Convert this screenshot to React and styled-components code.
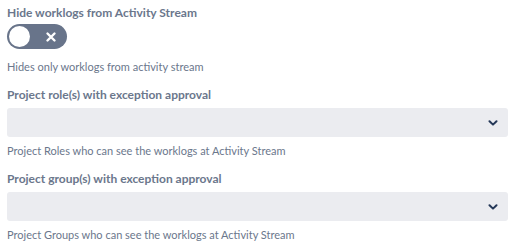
import styled, { createGlobalStyle } from "styled-components";

const GlobalStyle = createGlobalStyle`
  body {
    margin: 0;
    background: #fff;
    font-family: Lato, "Noto Sans", sans-serif;
  }
`;

function Chevron() {
  return (
    <svg width="10" height="6" viewBox="0 0 10 6">
      <path d="M1.5 1.2 L5 4.6 L8.5 1.2" fill="none" stroke="#253858" strokeWidth="2" strokeLinecap="round" strokeLinejoin="round" />
    </svg>
  );
}

function Toggle() {
  return (
    <ToggleTrack>
      <Knob />
      <svg width="12" height="12" viewBox="0 0 12 12">
        <path d="M2.5 2.5 L9.5 9.5 M9.5 2.5 L2.5 9.5" stroke="#fff" strokeWidth="2.4" strokeLinecap="round" />
      </svg>
    </ToggleTrack>
  );
}

function SelectField(props) {
  return (
    <Field>
      <Label>{props.label}</Label>
      <Select>
        <Chevron />
      </Select>
      <Help $top={7}>{props.help}</Help>
    </Field>
  );
}

export default function App() {
  return (
    <Page>
      <GlobalStyle />
      <Field>
        <Label $bottom={3}>Hide worklogs from Activity Stream</Label>
        <Toggle />
        <Help $top={11}>Hides only worklogs from activity stream</Help>
      </Field>
      <SelectField
        label="Project role(s) with exception approval"
        help="Project Roles who can see the worklogs at Activity Stream"
      />
      <SelectField
        label="Project group(s) with exception approval"
        help="Project Groups who can see the worklogs at Activity Stream"
      />
    </Page>
  );
}

const Page = styled.div`
  padding: 5px 4px 0 7px;
  display: flex;
  flex-direction: column;
  gap: 13px;
`;

const Field = styled.div`
  display: flex;
  flex-direction: column;
`;

const Label = styled.div`
  font-size: 12px;
  font-weight: 700;
  line-height: 16px;
  color: #6b778c;
  margin-bottom: ${(p) => p.$bottom ?? 5}px;
`;

const Help = styled.div`
  font-size: 11px;
  line-height: 14px;
  color: #6b778c;
  margin-top: ${(p) => p.$top}px;
`;

const ToggleTrack = styled.div`
  width: 60px;
  height: 25px;
  box-sizing: border-box;
  border-radius: 13px;
  background: #68748a;
  display: flex;
  align-items: center;
  padding: 0 10px 0 2px;
  justify-content: space-between;
`;

const Knob = styled.div`
  width: 21px;
  height: 21px;
  border-radius: 50%;
  background: #fff;
`;

const Select = styled.div`
  height: 29px;
  border-radius: 3px;
  background: #ebecf0;
  display: flex;
  align-items: center;
  justify-content: flex-end;
  padding-right: 10px;
`;
